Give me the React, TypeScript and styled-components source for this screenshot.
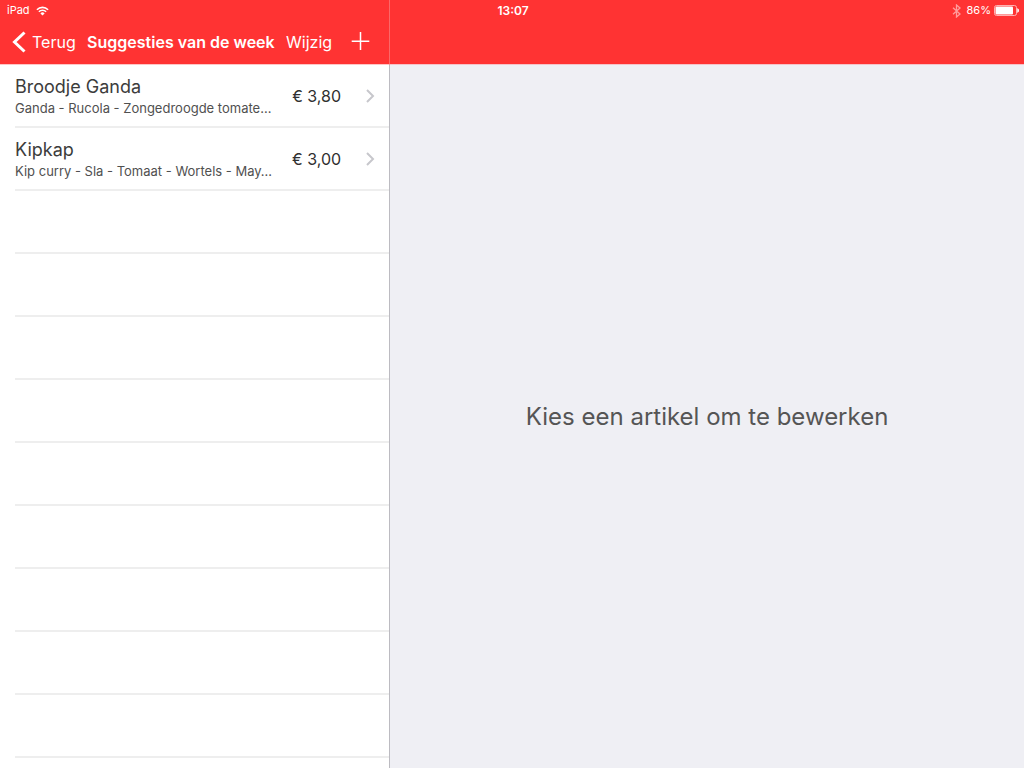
import React from "react";
import styled, { createGlobalStyle } from "styled-components";

const RED = "#ff3333";

const GlobalStyle = createGlobalStyle`
  * { box-sizing: border-box; }
  body {
    margin: 0;
    font-family: Inter, "Liberation Sans", sans-serif;
    color: #3c3c3c;
    background: #efeff4;
  }
`;

const Screen = styled.div`
  display: flex;
  min-height: 100vh;
`;

const StatusBar = styled.div`
  position: absolute;
  top: 0;
  left: 0;
  right: 0;
  padding: 0 5px 0 7px;
  display: grid;
  grid-template-columns: 1fr auto 1fr;
  align-items: center;
  color: #fff;
  font-size: 11px;
  line-height: 21px;
`;

const StatusGroup = styled.div<{ $end?: boolean }>`
  display: flex;
  align-items: center;
  justify-content: ${(p) => (p.$end ? "flex-end" : "flex-start")};
  gap: ${(p) => (p.$end ? "3px" : "6px")};
`;

const Bluetooth = styled.svg`
  margin-right: 3px;
`;

const Clock = styled.time`
  font-size: 12px;
  font-weight: 600;
`;

const Master = styled.section`
  flex: 0 0 38%;
  min-width: 0;
  display: flex;
  flex-direction: column;
  background: #fff;
`;

const NavBar = styled.header`
  flex: none;
  display: flex;
  align-items: center;
  height: 65px;
  padding: 20px 19px 0 12px;
  background: ${RED};
  border-bottom: 1px solid #ffc5c5;
  color: #fff;
  white-space: nowrap;
`;

const NavButton = styled.button`
  display: flex;
  align-items: center;
  gap: 6px;
  padding: 0;
  border: 0;
  background: none;
  color: inherit;
  font: inherit;
  font-size: 16px;
  line-height: 24px;
  cursor: pointer;
`;

const NavTitle = styled.h1`
  flex: 1;
  margin: 0;
  text-align: center;
  font-size: 16px;
  line-height: 24px;
  font-weight: 600;
`;

const NavActions = styled.div`
  display: flex;
  align-items: center;
  gap: 19px;
`;

const List = styled.ul`
  margin: 0;
  padding: 0 0 0 15px;
  list-style: none;
`;

const Row = styled.li`
  height: 63px;
  border-bottom: 2px solid #eeeeee;
`;

const RowLink = styled.a`
  display: flex;
  align-items: center;
  height: 100%;
  padding-right: 14px;
  color: inherit;
  text-decoration: none;
`;

const RowText = styled.div`
  flex: 1;
  min-width: 0;
`;

const RowTitle = styled.div`
  font-size: 18px;
  line-height: 24px;
`;

const RowDetail = styled.div`
  overflow: hidden;
  text-overflow: ellipsis;
  white-space: nowrap;
  font-size: 13px;
  line-height: 18px;
  color: #505050;
`;

const Price = styled.div`
  margin-right: 24px;
  font-size: 16px;
  line-height: 24px;
  color: #303030;
`;

const Detail = styled.main`
  flex: 1;
  min-width: 0;
  display: flex;
  flex-direction: column;
  border-left: 1px solid #bcbbc1;
`;

const DetailBar = styled.div`
  flex: none;
  height: 65px;
  margin-left: -1px;
  background: ${RED};
  border-bottom: 1px solid #f6c2c8;
  border-left: 1px solid #fb6868;
`;

const Placeholder = styled.p`
  flex: 1;
  display: flex;
  align-items: center;
  justify-content: center;
  margin: 0;
  font-size: 24px;
  line-height: 32px;
  color: #555555;
`;

const items = [
  {
    name: "Broodje Ganda",
    detail: "Ganda - Rucola - Zongedroogde tomate…",
    price: "€ 3,80",
  },
  {
    name: "Kipkap",
    detail: "Kip curry - Sla - Tomaat - Wortels - May…",
    price: "€ 3,00",
  },
];

const EMPTY_ROWS = 9;

export default function App() {
  return (
    <Screen>
      <GlobalStyle />
      <Master>
        <NavBar>
          <NavButton>
            <svg width="14" height="22" viewBox="0 0 14 22" aria-hidden="true">
              <path d="M12.5 1.5 2.5 11 12.5 20.5" fill="none" stroke="#fff" strokeWidth="3" />
            </svg>
            Terug
          </NavButton>
          <NavTitle>Suggesties van de week</NavTitle>
          <NavActions>
            <NavButton>Wijzig</NavButton>
            <NavButton aria-label="Toevoegen">
              <svg width="19" height="20" viewBox="0 0 19 20" aria-hidden="true">
                <path d="M9.5 0v18M.7 9.2h17.6" fill="none" stroke="#fff" strokeWidth="1.5" />
              </svg>
            </NavButton>
          </NavActions>
        </NavBar>
        <List>
          {items.map((item) => (
            <Row key={item.name}>
              <RowLink href="#">
                <RowText>
                  <RowTitle>{item.name}</RowTitle>
                  <RowDetail>{item.detail}</RowDetail>
                </RowText>
                <Price>{item.price}</Price>
                <svg width="10" height="14" viewBox="0 0 10 14" aria-hidden="true">
                  <path d="M2 1l6 6-6 6" fill="none" stroke="#c7c7cc" strokeWidth="2" />
                </svg>
              </RowLink>
            </Row>
          ))}
          {Array.from({ length: EMPTY_ROWS }, (_, i) => (
            <Row key={i} aria-hidden="true" />
          ))}
        </List>
      </Master>
      <Detail>
        <DetailBar />
        <Placeholder>Kies een artikel om te bewerken</Placeholder>
      </Detail>
      <StatusBar>
        <StatusGroup>
          iPad
          <svg width="13" height="10" viewBox="0 0 13 10" aria-label="Wi-Fi">
            <path d="M.9 3.7a8 8 0 0 1 11.2 0M2.9 5.8a5.1 5.1 0 0 1 7.2 0" fill="none" stroke="#fff" strokeWidth="1.6" />
            <path d="M6.5 9.6 4.4 7.4a3 3 0 0 1 4.2 0z" fill="#fff" />
          </svg>
        </StatusGroup>
        <Clock>13:07</Clock>
        <StatusGroup $end>
          <Bluetooth width="9" height="14" viewBox="0 0 9 14" aria-label="Bluetooth">
            <path d="M1 3.8l7 6.2-3.5 3V1L8 4 1 10.2" fill="none" stroke="#ff9d9d" strokeWidth="1.3" />
          </Bluetooth>
          86%
          <svg width="25" height="11" viewBox="0 0 25 11" aria-label="Batterij">
            <rect x=".5" y=".5" width="22" height="10" rx="2" fill="none" stroke="#ffb0b0" />
            <rect x="1.5" y="1.5" width="17.5" height="8" rx="1" fill="#fff" />
            <path d="M23.5 3.6a2 2 0 0 1 0 3.8z" fill="#fff" stroke="#fff" strokeWidth=".5" />
          </svg>
        </StatusGroup>
      </StatusBar>
    </Screen>
  );
}
